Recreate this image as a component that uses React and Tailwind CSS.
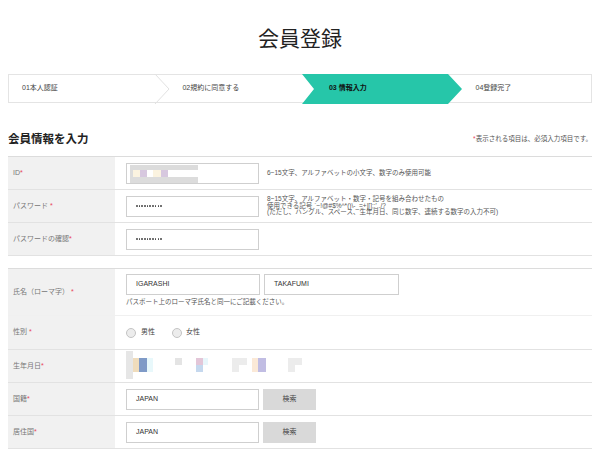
import React from 'react';

const FONT = "font-['Liberation_Sans','Noto_Sans_CJK_JP',sans-serif]";

const Req = () => <span className="text-[#e8445a]">*</span>;

const Label = ({ children }) => (
  <div className="w-[107px] shrink-0 bg-[#f1f1f1] pl-[5px] flex items-center text-[7px] text-[#777]">
    <span className="whitespace-pre">
      {children}
      <Req />
    </span>
  </div>
);

const Dots = () => (
  <div className="flex gap-[1.2px]">
    {Array.from({ length: 10 }).map((_, i) => (
      <span key={i} className="w-[1.5px] h-[1.5px] rounded-full bg-[#444]" />
    ))}
  </div>
);

const Input = ({ value, dots, className = '' }) => (
  <div className={`w-[133px] h-[21px] border border-[#cfcfcf] bg-white flex items-center pl-[9px] text-[7px] text-[#333] ${className}`}>
    {dots ? <Dots /> : value}
  </div>
);

const Blocks = ({ items }) => (
  <div className="relative">
    {items.map((b, i) => (
      <div key={i} className="absolute" style={{ left: b[0], top: b[1], width: b[2], height: b[3], background: b[4] }} />
    ))}
  </div>
);

const Steps = () => (
  <div className="relative mx-2 mt-[24px] h-[29px] border border-[#e4e4e4] text-[7px] text-[#444]">
    <svg className="absolute -left-px -top-px" width="586" height="30" viewBox="0 0 586 30">
      <polyline points="147,0 161,15 147,30" fill="none" stroke="#e2e2e2" strokeWidth="1" />
      <polygon points="294,0 440,0 454,15 440,30 294,30 306,15" fill="#26c6a9" />
    </svg>
    <div className="relative flex h-full items-center">
      <div className="w-[146px] pl-[13px]">01本人認証</div>
      <div className="w-[146px] pl-[28px]">02規約に同意する</div>
      <div className="w-[146px] pl-[29px] font-bold text-[#111]">03 情報入力</div>
      <div className="w-[146px] pl-[30px]">04登録完了</div>
    </div>
  </div>
);

export default function App() {
  return (
    <div className={`w-[600px] h-[452px] overflow-hidden bg-white ${FONT}`}>
      <h1 className="pt-[27px] text-center text-[21px] leading-[23px] text-[#222]">会員登録</h1>

      <Steps />

      <div className="mx-2 mt-[29px] flex items-end justify-between">
        <h2 className="text-[11.5px] leading-[14px] font-bold text-[#222]">会員情報を入力</h2>
        <p className="text-[6.5px] leading-[8px] text-[#555] pb-[3px]">
          <Req />表示される項目は、必須入力項目です。
        </p>
      </div>

      {/* table 1 */}
      <div className="mx-2 mt-[10px] border-b border-[#e2e2e2]">
        <div className="flex h-[33px] border-t border-[#dcdcdc]">
          <Label>ID</Label>
          <div className="flex items-center pl-[11px]">
            <div className="w-[133px] h-[21px] border border-[#cfcfcf] bg-white relative">
              <Blocks
                items={[
                  [3, 1, 68, 5, '#dcdcdc'],
                  [3, 6, 3, 7, '#dcdcdc'],
                  [6, 6, 7, 7, '#fbf3e0'],
                  [13, 6, 7, 7, '#d7c8df'],
                  [26, 6, 8, 7, '#fbf3e0'],
                  [34, 6, 7, 7, '#d7c8df'],
                  [3, 13, 68, 6, '#dcdcdc'],
                ]}
              />
            </div>
            <span className="ml-[8px] text-[6.5px] text-[#555]">6~15文字、アルファベットの小文字、数字のみ使用可能</span>
          </div>
        </div>
        <div className="flex h-[33px] border-t border-[#e2e2e2]">
          <Label>パスワード </Label>
          <div className="flex items-center pl-[11px]">
            <Input dots />
            <div className="ml-[8px] text-[6.5px] leading-[6.5px] text-[#555]">
              <div>8~15文字、アルファベット・数字・記号を組み合わせたもの</div>
              <div>使用できる記号 `~!@#$%^*()\-_=+|[]{};:',./?</div>
              <div>(ただし、ハングル、スペース、生年月日、同じ数字、連続する数字の入力不可)</div>
            </div>
          </div>
        </div>
        <div className="flex h-[33px] border-t border-[#e2e2e2]">
          <Label>パスワードの確認</Label>
          <div className="flex items-center pl-[11px]">
            <Input dots />
          </div>
        </div>
      </div>

      {/* table 2 */}
      <div className="mx-2 mt-[12px] border-b border-[#e2e2e2]">
        <div className="flex h-[47px] border-t border-[#dcdcdc]">
          <Label>氏名（ローマ字） </Label>
          <div className="flex flex-col pl-[11px] pt-[5px]">
            <div className="flex gap-[4px]">
              <Input value="IGARASHI" className="w-[134px]" />
              <Input value="TAKAFUMI" className="w-[135px]" />
            </div>
            <p className="mt-[3px] text-[6.5px] leading-[8px] text-[#555]">パスポート上のローマ字氏名と同一にご記載ください。</p>
          </div>
        </div>
        <div className="flex h-[34px] border-t border-[#f0f0f0]">
          <Label>性別 </Label>
          <div className="flex items-center pl-[11px] text-[7px] text-[#444]">
            <span className="w-[10px] h-[10px] rounded-full border border-[#c4c4c4] bg-[#ececec]" />
            <span className="ml-[5px]">男性</span>
            <span className="ml-[17px] w-[10px] h-[10px] rounded-full border border-[#c4c4c4] bg-[#ececec]" />
            <span className="ml-[4px]">女性</span>
          </div>
        </div>
        <div className="flex h-[33px] border-t border-[#e2e2e2]">
          <Label>生年月日</Label>
          <div className="flex-1 relative">
            <Blocks
              items={[
                [11, 1, 7, 28, '#e6e6e6'],
                [18, 8, 6, 14, '#efdcbc'],
                [24, 8, 8, 14, '#7f9ac7'],
                [32, 8, 6, 14, '#e8f8fb'],
                [60, 8, 7, 7, '#e4e4e4'],
                [81, 8, 7, 7, '#e3c6d8'],
                [81, 15, 7, 7, '#c5d8ee'],
                [88, 8, 5, 7, '#e8f6fb'],
                [117, 8, 15, 7, '#ececec'],
                [117, 15, 7, 7, '#ececec'],
                [137, 8, 6, 14, '#fbe9d7'],
                [143, 8, 8, 14, '#c1bde3'],
                [173, 8, 14, 7, '#ececec'],
                [173, 15, 7, 7, '#ececec'],
              ]}
            />
          </div>
        </div>
        <div className="flex h-[33px] border-t border-[#e2e2e2]">
          <Label>国籍</Label>
          <div className="flex items-center pl-[11px]">
            <Input value="JAPAN" />
            <button className="ml-[4px] w-[53px] h-[21px] bg-[#d9d9d9] text-[7px] text-[#444]">検索</button>
          </div>
        </div>
        <div className="flex h-[33px] border-t border-[#e2e2e2]">
          <Label>居住国</Label>
          <div className="flex items-center pl-[11px]">
            <Input value="JAPAN" />
            <button className="ml-[4px] w-[53px] h-[21px] bg-[#d9d9d9] text-[7px] text-[#444]">検索</button>
          </div>
        </div>
      </div>
    </div>
  );
}
